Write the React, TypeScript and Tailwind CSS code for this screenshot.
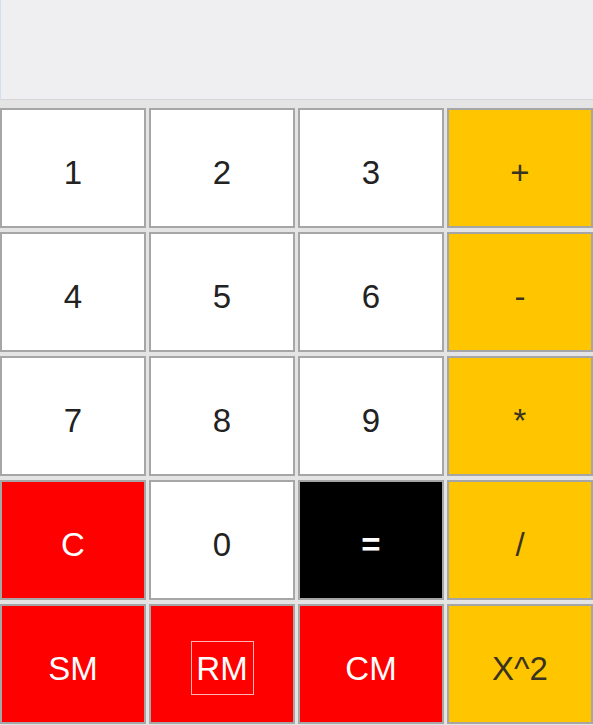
import React from "react";

type Key = {
  label: string;
  tone: "white" | "yellow" | "red" | "black";
  focused?: boolean;
};

const keys: Key[] = [
  { label: "1", tone: "white" },
  { label: "2", tone: "white" },
  { label: "3", tone: "white" },
  { label: "+", tone: "yellow" },
  { label: "4", tone: "white" },
  { label: "5", tone: "white" },
  { label: "6", tone: "white" },
  { label: "-", tone: "yellow" },
  { label: "7", tone: "white" },
  { label: "8", tone: "white" },
  { label: "9", tone: "white" },
  { label: "*", tone: "yellow" },
  { label: "C", tone: "red" },
  { label: "0", tone: "white" },
  { label: "=", tone: "black" },
  { label: "/", tone: "yellow" },
  { label: "SM", tone: "red" },
  { label: "RM", tone: "red", focused: true },
  { label: "CM", tone: "red" },
  { label: "X^2", tone: "yellow" },
];

const toneClass: Record<Key["tone"], string> = {
  white: "bg-white text-[#222222]",
  yellow: "bg-[#ffc600] text-[#3a3320]",
  red: "bg-[#ff0000] text-white",
  black: "bg-black text-white font-bold",
};

export default function App() {
  return (
    <div
      className="w-[593px] h-[725px] bg-[#e4e4e4] flex flex-col overflow-hidden"
      style={{ fontFamily: '"Liberation Sans", Arial, sans-serif' }}
    >
      <div className="h-[100px] shrink-0 bg-[#efeef0] border-l border-[#cfe0f5] border-b border-b-[#d6d6d6]" />
      <div className="mt-[8px] grid grid-cols-4 gap-x-[3px] gap-y-[4px] auto-rows-[120px]">
        {keys.map((k) => (
          <button
            key={k.label}
            className={`border-2 border-[#a6a6a6] flex items-center justify-center pt-[8px] text-[33px] leading-none ${toneClass[k.tone]}`}
          >
            {k.focused ? (
              <span className="border border-[#ffb3b3] w-[63px] h-[54px] flex items-center justify-center">
                {k.label}
              </span>
            ) : (
              k.label
            )}
          </button>
        ))}
      </div>
    </div>
  );
}
